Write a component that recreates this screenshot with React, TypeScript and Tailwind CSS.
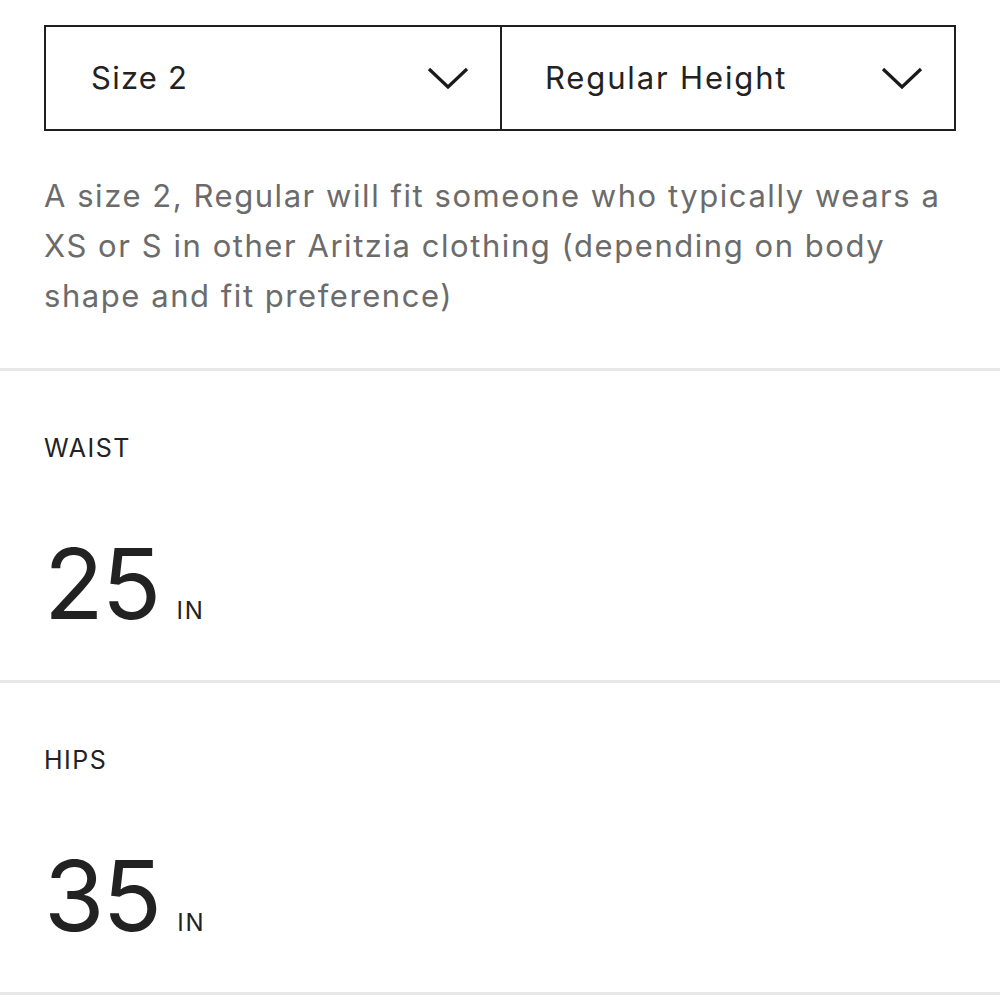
import React from "react";

function Chevron() {
  return (
    <svg width="42" height="24" viewBox="0 0 42 24" fill="none" className="shrink-0">
      <path d="M2 3 L21 21 L40 3" stroke="#1a1a1a" strokeWidth="3.2" strokeLinecap="butt" strokeLinejoin="miter" />
    </svg>
  );
}

function Measure({ label, value }: { label: string; value: string }) {
  return (
    <div className="border-b-[3px] border-[#e8e8e8] px-[44px] h-[312px] flex flex-col">
      <div className="mt-[65px] text-[25px] leading-none tracking-[0.06em] text-[#222]">{label}</div>
      <div className="mt-[74px] flex items-baseline">
        <span className="text-[98px] leading-none tracking-[-0.02em] text-[#222]">{value}</span>
        <span className="ml-[17px] text-[24px] leading-none tracking-[0.08em] text-[#222]">IN</span>
      </div>
    </div>
  );
}

export default function App() {
  return (
    <div className="w-[1000px] h-[1000px] bg-white overflow-hidden" style={{ fontFamily: "Inter, 'Noto Sans', sans-serif" }}>
      <div className="pt-[25px] px-[44px]">
        <div className="flex h-[106px] border-2 border-[#1f1f1f]">
          <div className="flex-1 flex items-center justify-between pl-[45px] pr-[31px] border-r-2 border-[#1f1f1f]">
            <span className="text-[31px] tracking-[0.04em] text-[#222]">Size 2</span>
            <Chevron />
          </div>
          <div className="flex-1 flex items-center justify-between pl-[43px] pr-[31px]">
            <span className="text-[31px] tracking-[0.06em] text-[#222]">Regular Height</span>
            <Chevron />
          </div>
        </div>
        <p className="mt-[40px] text-[31px] leading-[50px] tracking-[0.05em] text-[#6b6b6b]">
          A size 2, Regular will fit someone who typically wears a XS or S in other Aritzia clothing (depending on body shape and fit preference)
        </p>
      </div>
      <div className="mt-[47px] border-b-[3px] border-[#e8e8e8]" />
      <Measure label="WAIST" value="25" />
      <Measure label="HIPS" value="35" />
    </div>
  );
}
